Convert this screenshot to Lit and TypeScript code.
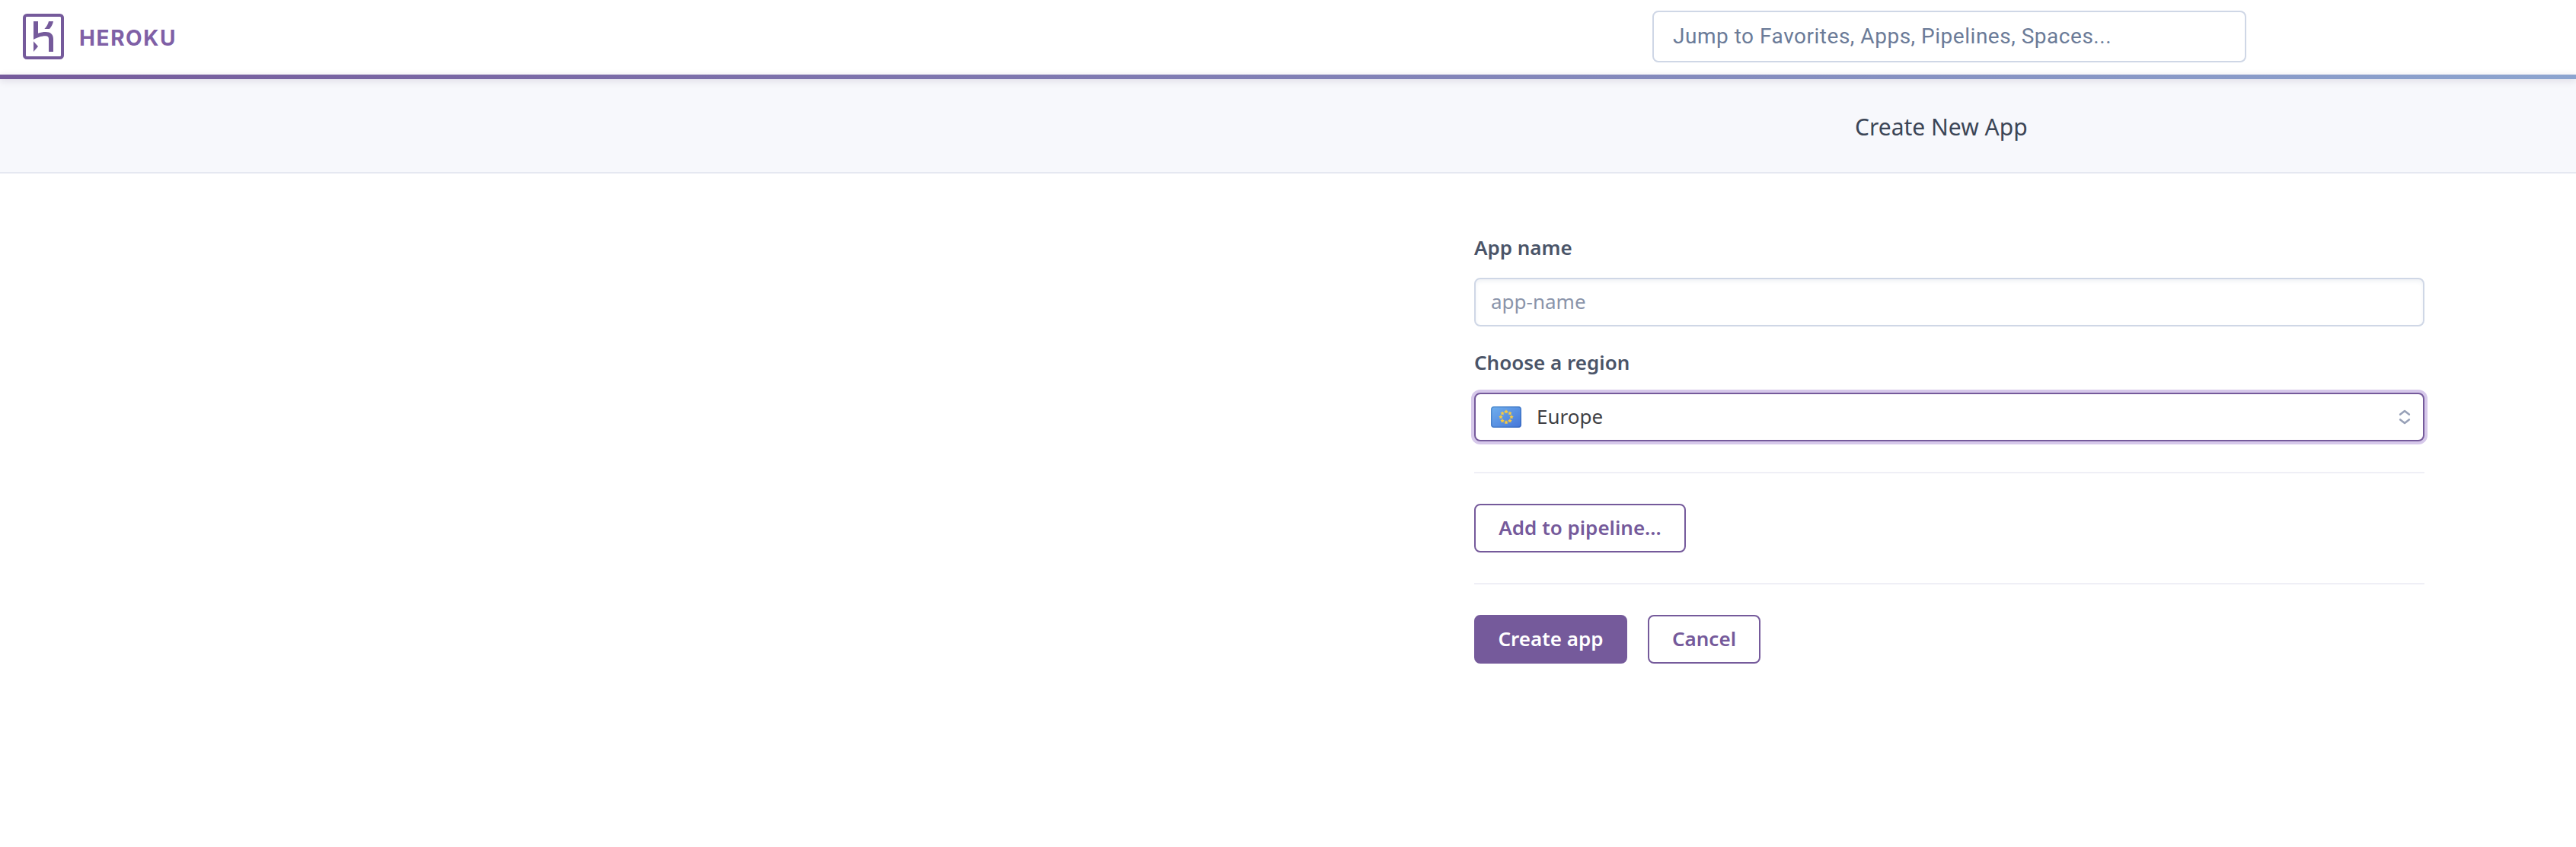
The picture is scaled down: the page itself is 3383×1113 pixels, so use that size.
import { LitElement, html, svg, css } from "lit";
import { customElement } from "lit/decorators.js";

const starPoints = (cx: number, cy: number, r: number) =>
  Array.from({ length: 10 }, (_, i) => {
    const a = (Math.PI / 5) * i - Math.PI / 2;
    const d = i % 2 ? r * 0.5 : r;
    return `${(cx + d * Math.cos(a)).toFixed(2)},${(cy + d * Math.sin(a)).toFixed(2)}`;
  }).join(" ");

@customElement("heroku-mark")
class HerokuMark extends LitElement {
  static styles = css`
    :host { display: block; width: 54px; height: 60px; }
    svg { display: block; width: 54px; height: 60px; }
  `;
  render() {
    return html`<svg viewBox="90 54 162 180">
      <rect x="96" y="60" width="150" height="168" rx="10" fill="none" stroke="#755a9b" stroke-width="12" />
      <g fill="#755a9b">
        <path d="M132 84h18v47c10-3 20-5 30-5 20 0 30 10 30 28v50h-18v-50c0-8-4-12-12-12-20 0-34 7-48 14z" />
        <path d="M132 163l18 20-18 21z" />
        <path d="M192 84h18c-2 11-7 21-15 30h-20c9-9 14-19 17-30z" />
      </g>
    </svg>`;
  }
}

@customElement("eu-flag")
class EuFlag extends LitElement {
  static styles = css`
    :host { display: block; width: 40px; height: 28px; }
    svg { display: block; }
  `;
  render() {
    return html`<svg width="40" height="28" viewBox="0 0 40 28">
      <defs>
        <linearGradient id="sky" x1="0" y1="0" x2="1" y2="1">
          <stop offset="0" stop-color="#70b0ee" />
          <stop offset="1" stop-color="#4475d8" />
        </linearGradient>
      </defs>
      <rect width="40" height="28" rx="4" fill="url(#sky)" />
      <rect x="0.75" y="0.75" width="38.5" height="26.5" rx="3.4" fill="none" stroke="#1c4f96" stroke-opacity="0.33" stroke-width="1.5" />
      ${Array.from({ length: 8 }, (_, i) => {
        const a = (Math.PI / 4) * i;
        return svg`<polygon fill="#fbcb3c" points=${starPoints(20 + 7 * Math.sin(a), 14 - 7 * Math.cos(a), 2.9)} />`;
      })}
    </svg>`;
  }
}

@customElement("app-root")
class AppRoot extends LitElement {
  static styles = css`
    :host {
      display: block;
      height: 1113px;
      background: #fff;
      font: 400 26px/40px "Noto Sans", "Open Sans", sans-serif;
      color: #3f3f44;
    }
    * { box-sizing: border-box; }
    .top {
      display: flex;
      align-items: center;
      height: 98px;
      padding: 0 433px 0 30px;
    }
    .brand { display: flex; align-items: center; gap: 20px; padding-top: 0; }
    .word {
      padding-top: 2px;
      font: 700 28px/40px Inter, "Noto Sans", sans-serif;
      letter-spacing: 1.6px;
      color: #7f60a6;
    }
    heroku-mark { margin-bottom: 2px; }
    .search {
      display: flex;
      align-items: center;
      width: 780px;
      height: 68px;
      margin: -2px 0 0 auto;
      padding: 0 25px;
      border: 2px solid #cfd7e6;
      border-radius: 8px;
      font: 400 28px/40px Roboto, sans-serif;
      letter-spacing: 0.52px;
      color: #6b7b98;
      white-space: nowrap;
    }
    .bar {
      position: relative;
      height: 6px;
      background: linear-gradient(to right, #755a9b, #8ca4cf);
      box-shadow: 0 2px 10px rgba(50, 30, 70, 0.16);
    }
    .sub {
      display: flex;
      align-items: center;
      height: 124px;
      padding: 3px 0 0 2436px;
      background: #f7f8fc;
      border-bottom: 2px solid #e5e8f1;
      font-size: 30px;
      color: #3b4556;
    }
    .form {
      display: flex;
      flex-direction: column;
      width: 1248px;
      margin: 77px 0 0 1936px;
    }
    .label { font-weight: 600; color: #4a5468; margin-bottom: 20px; }
    .field {
      display: flex;
      align-items: center;
      height: 64px;
      padding: 0 20px;
      border: 2px solid #cfd7e6;
      border-radius: 8px;
      background: #fff;
    }
    .field.name {
      margin-bottom: 27px;
      padding-bottom: 2px;
      color: #8a94aa;
      box-shadow: inset 0 3px 5px rgba(60, 80, 130, 0.07);
    }
    .field.region {
      gap: 20px;
      padding-right: 16px;
      border-color: #755a9b;
      box-shadow: 0 0 0 4px #d6c8ea;
    }
    .country { padding-bottom: 2px; }
    .chevrons { margin-left: auto; display: block; }
    .rule { height: 2px; background: #efeff6; margin: 40px 0; }
    .actions { display: flex; gap: 27px; }
    .btn {
      display: flex;
      align-items: center;
      justify-content: center;
      height: 64px;
      padding-bottom: 2px;
      border: 2px solid #755a9b;
      border-radius: 8px;
      font-weight: 600;
      color: #755a9b;
      white-space: nowrap;
    }
    .pipeline { width: 278px; }
    .create { width: 201px; background: #755a9b; color: #fff; }
    .cancel { width: 148px; }
  `;
  render() {
    return html`
      <div class="top">
        <div class="brand"><heroku-mark></heroku-mark><span class="word">HEROKU</span></div>
        <div class="search">Jump to Favorites, Apps, Pipelines, Spaces...</div>
      </div>
      <div class="bar"></div>
      <div class="sub">Create New App</div>
      <div class="form">
        <div class="label">App name</div>
        <div class="field name">app-name</div>
        <div class="label">Choose a region</div>
        <div class="field region">
          <eu-flag></eu-flag>
          <span class="country">Europe</span>
          <svg class="chevrons" width="16" height="20" viewBox="0 0 16 20" fill="none" stroke="#98a1b8" stroke-width="2.6" stroke-linecap="round" stroke-linejoin="round">
            <path d="M2.2 6.6L8 2L13.8 6.6M2.2 13.4L8 18L13.8 13.4" />
          </svg>
        </div>
        <div class="rule"></div>
        <div class="actions"><div class="btn pipeline">Add to pipeline...</div></div>
        <div class="rule"></div>
        <div class="actions">
          <div class="btn create">Create app</div>
          <div class="btn cancel">Cancel</div>
        </div>
      </div>
    `;
  }
}
